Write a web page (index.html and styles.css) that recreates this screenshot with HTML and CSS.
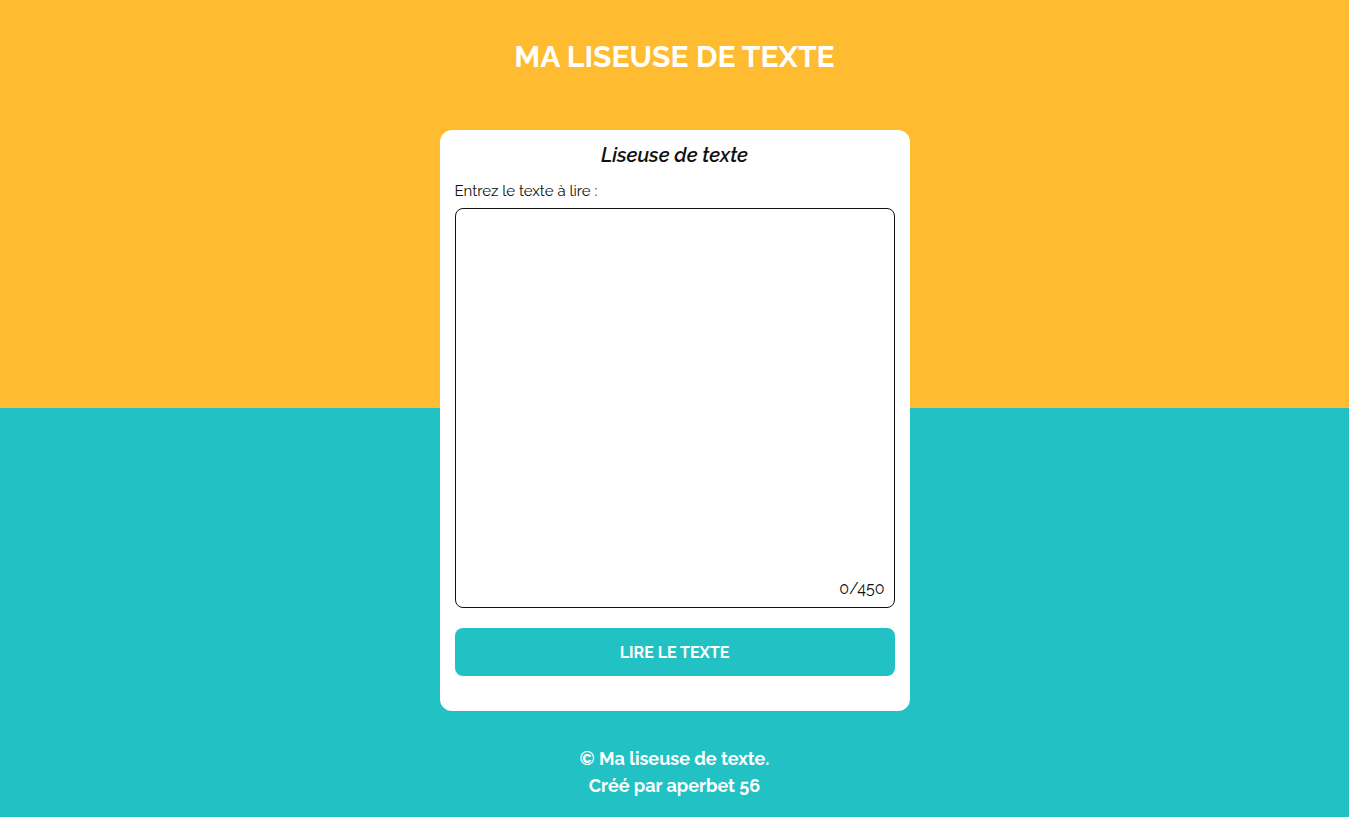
FILE: index.html
```html
<!DOCTYPE html>
<html lang="fr">
<head>
<meta charset="utf-8">
<title>Ma liseuse de texte</title>
<link rel="stylesheet" href="styles.css">
</head>
<body>
<header class="site-header">
  <h1 class="site-title">MA LISEUSE DE TEXTE</h1>
</header>
<main class="main">
  <section class="card">
    <h2 class="card-title">Liseuse de texte</h2>
    <label class="label" for="txt">Entrez le texte à lire :</label>
    <div class="area-wrap">
      <textarea id="txt" class="area" maxlength="450"></textarea>
      <span class="counter">0/450</span>
    </div>
    <button class="btn" type="button">LIRE LE TEXTE</button>
  </section>
</main>
<footer class="footer">
  <p class="footer-line">© Ma liseuse de texte.</p>
  <p class="footer-line">Créé par aperbet 56</p>
</footer>
</body>
</html>
```
FILE: styles.css
```css
* { box-sizing: border-box; }
html, body { margin: 0; padding: 0; }
body {
  min-height: 100vh;
  font-family: "Raleway", "Lato", sans-serif;
  background: linear-gradient(to bottom, #ffbc30 0, #ffbc30 50%, #22c2c4 50%, #22c2c4 100%);
  color: #111;
  display: flex;
  flex-direction: column;
  align-items: center;
}
.site-header {
  padding-top: 38px;
  height: 130px;
}
.site-title {
  margin: 0;
  color: #fff;
  font-size: 30px;
  font-weight: 700;
  line-height: 38px;
  letter-spacing: 0.05px;
}
.card {
  width: 470px;
  background: #fff;
  border-radius: 12px;
  padding: 12px 15px 35px;
  display: flex;
  flex-direction: column;
}
.card-title {
  margin: 0;
  text-align: center;
  font-style: italic;
  font-weight: 600;
  font-size: 20px;
  line-height: 26px;
  color: #111;
}
.label {
  margin-top: 14px;
  font-size: 15px;
  line-height: 18px;
  color: #111;
}
.area-wrap {
  position: relative;
  margin-top: 8px;
}
.area {
  display: block;
  width: 440px;
  height: 400px;
  border: 1px solid #111;
  border-radius: 8px;
  resize: none;
  padding: 10px;
  font-family: inherit;
  font-size: 15px;
  outline: none;
}
.counter {
  position: absolute;
  right: 10px;
  bottom: 10px;
  font-size: 16px;
  line-height: 18px;
  color: #111;
}
.btn {
  margin-top: 20px;
  height: 48px;
  border: none;
  border-radius: 8px;
  background: #22c2c4;
  color: #fff;
  font-family: "Raleway", "Lato", sans-serif;
  font-weight: 700;
  font-size: 16px;
  cursor: pointer;
}
.footer {
  padding-top: 34px;
  text-align: center;
}
.footer-line {
  margin: 0;
  color: #fff;
  font-weight: 700;
  font-size: 18px;
  line-height: 27px;
}
```
